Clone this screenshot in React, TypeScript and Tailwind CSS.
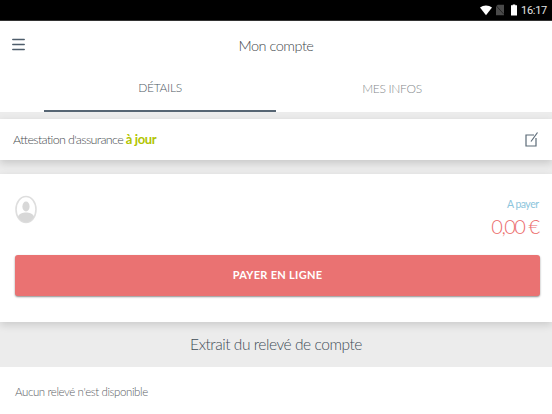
import { Menu } from "lucide-react";

const font = { fontFamily: '"Lato", "Noto Sans", sans-serif' };

function StatusBar() {
  return (
    <div className="flex h-[21px] items-center justify-end bg-black pr-[5px] border-b border-[#333]">
      <svg width="12" height="11" viewBox="0 0 14 12" className="mr-[4px]">
        <path d="M0 2.5C4 -0.8 10 -0.8 14 2.5L7 11.5Z" fill="#fff" />
      </svg>
      <svg width="8" height="12" viewBox="0 0 9 12" className="mr-[7px]">
        <path d="M0 2 2 0H9V12H0Z" fill="#4a4a4a" />
        <path d="M0 1 9 11" stroke="#222" strokeWidth="1" />
      </svg>
      <svg width="6" height="12" viewBox="0 0 7 13" className="mr-[4px]">
        <path d="M2 0H5V1H7V13H0V1H2Z" fill="#fff" />
      </svg>
      <span className="text-[11px] leading-none tracking-[-0.3px] text-[#e4e4e4]" style={{ fontFamily: "Roboto, sans-serif" }}>
        16:17
      </span>
    </div>
  );
}

function Avatar() {
  return (
    <svg width="22" height="29" viewBox="0 0 22 29">
      <ellipse cx="11" cy="14.5" rx="10" ry="13" fill="#fff" stroke="#dedede" strokeWidth="1.6" />
      <ellipse cx="11" cy="11.5" rx="3.6" ry="5" fill="#d8d8d8" />
      <path d="M3 22C4 18.5 7.5 17.5 11 17.5S18 18.5 19 22C17 25.5 14 27.2 11 27.2S5 25.5 3 22Z" fill="#d8d8d8" />
    </svg>
  );
}

export default function App() {
  return (
    <div className="flex h-[414px] w-[552px] flex-col overflow-hidden bg-[#ececec]" style={font}>
      <StatusBar />
      <div className="bg-white">
        <div className="relative flex h-[49px] items-center justify-center">
          <Menu size={17} strokeWidth={2.2} className="absolute left-[10px] top-[15px] text-[#4e5d6b]" />
          <span className="text-[14.5px] font-light tracking-[-0.5px] text-[#43484c]">Mon compte</span>
        </div>
        <div className="flex h-[42px] pl-[44px] pr-[44px]">
          <div className="flex w-[232px] items-center justify-center border-b-2 border-[#566573] pb-1 text-[12px] font-light tracking-[-0.3px] text-[#4f5b65]">
            DÉTAILS
          </div>
          <div className="flex flex-1 items-center justify-center pb-1 text-[12px] font-light tracking-[-0.3px] text-[#85898c]">
            MES INFOS
          </div>
        </div>
      </div>
      <div className="mt-[7px] flex h-[41px] items-center justify-between bg-white pl-[13px] pr-[13px] shadow-[0_3px_8px_rgba(0,0,0,0.16)]">
        <span className="text-[12.5px] font-light tracking-[-0.65px] text-[#484c50]">
          Attestation d'assurance <span className="text-[13px] font-bold tracking-[-0.4px] text-[#b1c400]">à jour</span>
        </span>
        <svg width="14" height="15" viewBox="0 0 14 15" fill="none" stroke="#5b6a77" strokeWidth="1.2">
          <path d="M9 3H1V14H11V6" />
          <path d="M6 9.5 12.5 0.5" />
        </svg>
      </div>
      <div className="mt-[14px] flex h-[148px] flex-col bg-white pl-[15px] pr-[12px] shadow-[0_3px_8px_rgba(0,0,0,0.14)]">
        <div className="flex items-start justify-between">
          <div className="mt-[21px]">
            <Avatar />
          </div>
          <div className="mt-[23px] flex flex-col items-end pr-[1.5px]">
            <span className="text-[10.5px] leading-[14px] tracking-[-0.5px] text-[#8cc5dc]">A payer</span>
            <span className="mt-[3px] text-[20px] font-light leading-[24px] tracking-[-1.5px] text-[#ec6c6c]">0,00 €</span>
          </div>
        </div>
        <button
          type="button"
          className="mt-[17px] h-[41px] w-full rounded-[3px] bg-[#ea7272] text-[11px] font-bold tracking-[0.3px] text-white shadow-[0_1px_2px_rgba(0,0,0,0.45)]"
        >
          PAYER EN LIGNE
        </button>
      </div>
      <div className="flex h-[45px] shrink-0 items-center justify-center text-[15.5px] font-light tracking-[-0.45px] text-[#3f4c57]">
        Extrait du relevé de compte
      </div>
      <div className="flex-1 bg-white pl-[15px] pt-[17px] text-[11.5px] font-light leading-[15px] tracking-[-0.4px] text-[#5c6165]">
        Aucun relevé n'est disponible
      </div>
    </div>
  );
}
